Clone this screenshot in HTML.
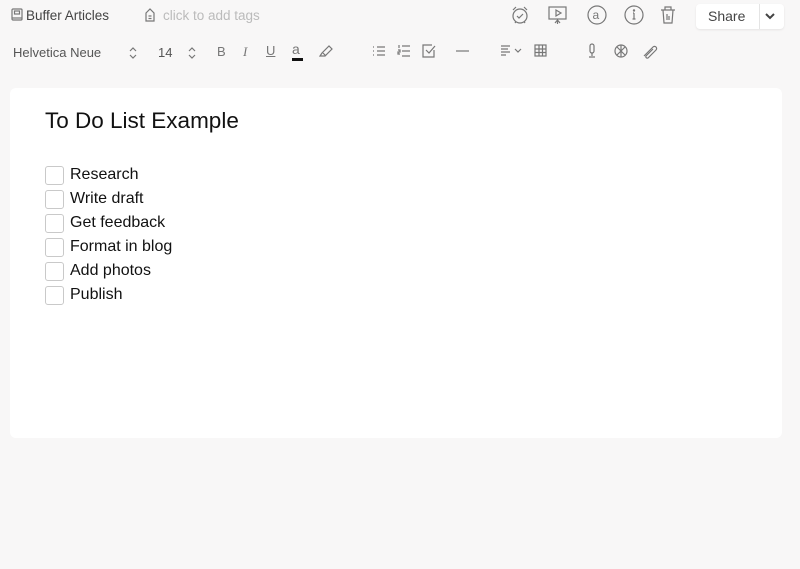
<!DOCTYPE html>
<html><head><meta charset="utf-8"><style>
*{margin:0;padding:0;box-sizing:border-box}
body{width:800px;height:569px;background:#f8f7f7;font-family:"Liberation Sans",sans-serif;position:relative;overflow:hidden}
.a{position:absolute}
svg{position:absolute;fill:none;stroke:#777;stroke-width:1.2}
.t{font-size:13px;color:#555}
.card{left:10px;top:88px;width:772px;height:350px;background:#fff;border-radius:6px}
.cb{position:absolute;left:45px;width:19px;height:19px;border:1px solid #c9c9c9;border-radius:3px;background:#fff}
.li{position:absolute;left:70px;font-size:16px;color:#111}
</style></head><body>
<svg style="left:11px;top:8px" width="12" height="14"><rect x="1" y="1" width="10" height="11" rx="1"/><rect x="3.5" y="3" width="5" height="3"/><line x1="1" y1="10" x2="11" y2="10"/></svg>
<div class="a" style="left:26px;top:8px;font-size:13.5px;color:#444">Buffer Articles</div>
<svg style="left:143px;top:7px" width="14" height="16"><path d="M3 6 L7 2 L11 6 V14 H3 Z"/><line x1="5.5" y1="9" x2="8.5" y2="9"/><line x1="5.5" y1="11.5" x2="8.5" y2="11.5"/></svg>
<div class="a" style="left:163px;top:8px;font-size:13.5px;color:#bbb">click to add tags</div>

<svg style="left:510px;top:5px" width="20" height="20"><circle cx="10" cy="11" r="7"/><path d="M7 11l2 2 4-4M3 5l3-3M17 5l-3-3M5 18l1-1.5M15 18l-1-1.5"/></svg>
<svg style="left:547px;top:5px" width="22" height="20"><rect x="2" y="2" width="17" height="12"/><path d="M9 5v6l5-3z M10.5 14v5 M8 18l2.5-3 2.5 3"/></svg>
<svg style="left:587px;top:5px" width="20" height="20"><circle cx="10" cy="10" r="9"/><text x="5.5" y="14" font-size="12" fill="#777" stroke="none" font-family="Liberation Sans">a</text></svg>
<svg style="left:624px;top:5px" width="20" height="20"><circle cx="10" cy="10" r="9"/><path d="M10 8v6M8.5 14h3M9 8h1"/><circle cx="10" cy="5.5" r=".6"/></svg>
<svg style="left:659px;top:5px" width="18" height="20"><path d="M2 5h14M6 5V2h6v3M4 5l1 13h8l1-13M8 9v6M10 11v4"/></svg>
<div class="a" style="left:696px;top:4px;width:88px;height:25px;background:#fff;border-radius:4px;box-shadow:0 1px 2px rgba(0,0,0,.08)"></div>
<div class="a" style="left:759px;top:4px;width:1px;height:25px;background:#e4e4e4"></div>
<div class="a" style="left:708px;top:8px;font-size:14px;color:#444">Share</div>
<svg style="left:765px;top:12px;stroke:#444;stroke-width:2" width="10" height="8"><path d="M1 2l4 4 4-4"/></svg>

<div class="a t" style="left:13px;top:45px">Helvetica Neue</div>
<svg style="left:129px;top:46px" width="8" height="14"><path d="M1 5l3-3 3 3M1 9l3 3 3-3"/></svg>
<div class="a t" style="left:158px;top:45px">14</div>
<svg style="left:188px;top:46px" width="8" height="14"><path d="M1 5l3-3 3 3M1 9l3 3 3-3"/></svg>
<div class="a" style="left:217px;top:44px;font-size:13px;color:#777">B</div>
<div class="a" style="left:243px;top:44px;font-size:13px;color:#777;font-family:'Liberation Serif';font-style:italic">I</div>
<div class="a" style="left:266px;top:43px;font-size:13px;color:#777;text-decoration:underline">U</div>
<div class="a" style="left:292px;top:41px;font-size:14px;color:#777">a</div>
<div class="a" style="left:292px;top:58px;width:11px;height:3px;background:#111"></div>
<svg style="left:318px;top:44px" width="16" height="14"><path d="M2 12h5l7-7-3-3-7 7z M5 9l3 3"/></svg>
<svg style="left:372px;top:45px" width="14" height="12"><path d="M5 2h8M5 6h8M5 10h8M1 2h1M1 6h1M1 10h1"/></svg>
<svg style="left:397px;top:44px" width="14" height="14"><path d="M5 2h8M5 7h8M5 12h8M2 1v3M1 6h2v2H1v2h2"/></svg>
<svg style="left:422px;top:44px" width="14" height="14"><path d="M12 6v7H1V1h9M4 6l3 3 6-7"/></svg>
<svg style="left:456px;top:50px" width="14" height="2"><path d="M0 1h13"/></svg>
<svg style="left:500px;top:44px" width="26" height="14"><path d="M1 2h9M1 5h7M1 8h9M1 11h5M15 5l3 3 3-3"/></svg>
<svg style="left:534px;top:44px" width="14" height="14"><rect x="1" y="1" width="11" height="11"/><path d="M1 5h11M1 8.5h11M5 1v11M8.5 1v11"/></svg>
<svg style="left:587px;top:43px" width="10" height="16"><rect x="3" y="1" width="4" height="9" rx="2"/><path d="M5 10v3M2 14h6"/></svg>
<svg style="left:613px;top:43px" width="16" height="16"><circle cx="8" cy="8" r="6"/><path d="M4 4l8 8M12 4l-8 8M8 2v12"/></svg>
<svg style="left:641px;top:43px" width="18" height="16"><path d="M3 13L12 4a2 2 0 0 1 3 3L7 15a1.5 1.5 0 0 1-2-2l7-7"/></svg>

<div class="a card"></div>
<div class="a" style="left:45px;top:108px;font-size:22.5px;color:#111">To Do List Example</div>
<div class="cb" style="top:166px"></div><div class="li" style="top:166px">Research</div>
<div class="cb" style="top:190px"></div><div class="li" style="top:190px">Write draft</div>
<div class="cb" style="top:214px"></div><div class="li" style="top:214px">Get feedback</div>
<div class="cb" style="top:238px"></div><div class="li" style="top:238px">Format in blog</div>
<div class="cb" style="top:262px"></div><div class="li" style="top:262px">Add photos</div>
<div class="cb" style="top:286px"></div><div class="li" style="top:286px">Publish</div>
</body></html>
